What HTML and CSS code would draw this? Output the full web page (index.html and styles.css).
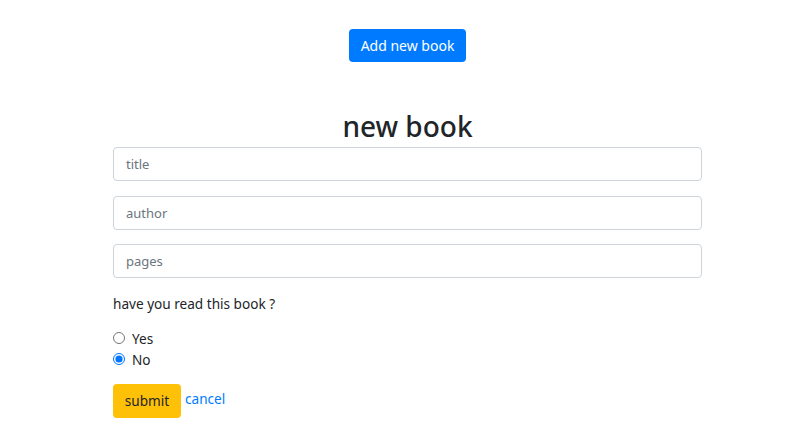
FILE: index.html
```html
<!DOCTYPE html>
<html>
<head>
<meta charset="utf-8">
<link rel="stylesheet" href="styles.css">
</head>
<body>
<div class="page">
  <div class="top">
    <button class="btn btn-primary">Add new book</button>
  </div>
  <div class="form-wrap">
    <h2 class="title">new book</h2>
    <form class="book-form">
      <input class="field" type="text" placeholder="title">
      <input class="field" type="text" placeholder="author">
      <input class="field" type="text" placeholder="pages">
      <p class="question">have you read this book ?</p>
      <div class="radios">
        <label class="radio"><input type="radio" name="read"> Yes</label>
        <label class="radio"><input type="radio" name="read" checked> No</label>
      </div>
      <div class="actions">
        <button type="button" class="btn btn-warning">submit</button>
        <a class="link" href="#">cancel</a>
      </div>
    </form>
  </div>
</div>
</body>
</html>
```
FILE: styles.css
```css
html, body {
  margin: 0;
  padding: 0;
  background: #fff;
}
body {
  font-family: "Noto Sans", "Open Sans", sans-serif;
  color: #212529;
}
.page {
  padding-left: 12px;
}
.top {
  display: flex;
  justify-content: center;
  padding-top: 29px;
}
.btn {
  border: none;
  border-radius: 4px;
  font-family: inherit;
  cursor: pointer;
}
.btn-primary {
  background: #007bff;
  color: #fff;
  font-size: 14px;
  height: 33px;
  padding: 0 12px;
}
.form-wrap {
  width: 589px;
  margin: 0 auto;
  padding-top: 46px;
}
.title {
  margin: 0 0 3px;
  text-align: center;
  font-size: 28px;
  font-weight: 500;
  line-height: 36px;
}
.book-form {
  display: flex;
  flex-direction: column;
}
.field {
  box-sizing: border-box;
  height: 34px;
  border: 1px solid #ced4da;
  border-radius: 4px;
  padding: 0 12px;
  font-family: inherit;
  font-size: 13px;
  margin-bottom: 14.5px;
  color: #495057;
}
.field::placeholder {
  color: #6c757d;
}
.question {
  margin: 1px 0 14px;
  font-size: 13.6px;
  line-height: 20px;
}
.radios {
  display: flex;
  flex-direction: column;
}
.radio {
  display: flex;
  align-items: center;
  gap: 7px;
  font-size: 13.6px;
  line-height: 21px;
}
.radio input {
  margin: 0;
  width: 12px;
  height: 12px;
}
.actions {
  display: flex;
  align-items: center;
  gap: 4px;
  margin-top: 14px;
}
.btn-warning {
  background: #ffc107;
  color: #212529;
  font-size: 13.6px;
  height: 34px;
  width: 68px;
  padding: 0;
}
.link {
  color: #007bff;
  text-decoration: none;
  font-size: 13.6px;
  margin-top: -4px;
}
```
